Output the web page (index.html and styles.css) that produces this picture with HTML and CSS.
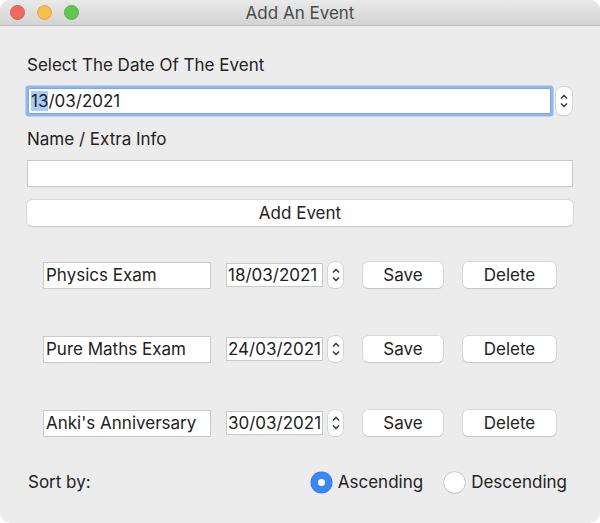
FILE: index.html
```html
<!DOCTYPE html>
<html>
<head>
<meta charset="utf-8">
<link rel="stylesheet" href="styles.css">
</head>
<body>
<div class="window">
  <div class="titlebar">
    <div class="lights">
      <span class="light red"></span>
      <span class="light yellow"></span>
      <span class="light green"></span>
    </div>
    <div class="title">Add An Event</div>
  </div>
  <div class="content">
    <div class="label first">Select The Date Of The Event</div>
    <div class="date-row">
      <div class="date-field focused"><span class="sel">13</span>/03/2021</div>
      <div class="stepper big">
        <svg width="10" height="18" viewBox="0 0 10 18"><path d="M2 6.5 L5 3.5 L8 6.5" fill="none" stroke="#2a2a2a" stroke-width="1.3"/><path d="M2 11.5 L5 14.5 L8 11.5" fill="none" stroke="#2a2a2a" stroke-width="1.3"/></svg>
      </div>
    </div>
    <div class="label second">Name / Extra Info</div>
    <div class="text-field wide"></div>
    <div class="button add">Add Event</div>

    <div class="event-row r1">
      <div class="text-field name">Physics Exam</div>
      <div class="text-field date">18/03/2021</div>
      <div class="stepper small">
        <svg width="10" height="18" viewBox="0 0 10 18"><path d="M2 6.5 L5 3.5 L8 6.5" fill="none" stroke="#2a2a2a" stroke-width="1.3"/><path d="M2 11.5 L5 14.5 L8 11.5" fill="none" stroke="#2a2a2a" stroke-width="1.3"/></svg>
      </div>
      <div class="button save">Save</div>
      <div class="button delete">Delete</div>
    </div>
    <div class="event-row">
      <div class="text-field name">Pure Maths Exam</div>
      <div class="text-field date">24/03/2021</div>
      <div class="stepper small">
        <svg width="10" height="18" viewBox="0 0 10 18"><path d="M2 6.5 L5 3.5 L8 6.5" fill="none" stroke="#2a2a2a" stroke-width="1.3"/><path d="M2 11.5 L5 14.5 L8 11.5" fill="none" stroke="#2a2a2a" stroke-width="1.3"/></svg>
      </div>
      <div class="button save">Save</div>
      <div class="button delete">Delete</div>
    </div>
    <div class="event-row">
      <div class="text-field name">Anki's Anniversary</div>
      <div class="text-field date">30/03/2021</div>
      <div class="stepper small">
        <svg width="10" height="18" viewBox="0 0 10 18"><path d="M2 6.5 L5 3.5 L8 6.5" fill="none" stroke="#2a2a2a" stroke-width="1.3"/><path d="M2 11.5 L5 14.5 L8 11.5" fill="none" stroke="#2a2a2a" stroke-width="1.3"/></svg>
      </div>
      <div class="button save">Save</div>
      <div class="button delete">Delete</div>
    </div>

    <div class="sort-row">
      <div class="sort-label">Sort by:</div>
      <div class="radios">
        <div class="radio-item"><span class="radio on"></span><span>Ascending</span></div>
        <div class="radio-item"><span class="radio"></span><span>Descending</span></div>
      </div>
    </div>
  </div>
</div>
</body>
</html>
```
FILE: styles.css
```css
html, body {
  margin: 0;
  padding: 0;
  background: #ffffff;
}
body {
  font-family: Inter, "Noto Sans", sans-serif;
  color: #222222;
  font-size: 17px;
}
.window {
  width: 600px;
  height: 523px;
  background: #ececec;
  border-radius: 10px;
  overflow: hidden;
  display: flex;
  flex-direction: column;
}
.titlebar {
  height: 25px;
  background: linear-gradient(#e9e9e9, #d4d4d4);
  border-bottom: 1px solid #bdbdbd;
  display: flex;
  align-items: center;
  position: relative;
}
.lights {
  display: flex;
  gap: 12px;
  padding-left: 10px;
}
.light {
  width: 15px;
  height: 15px;
  border-radius: 50%;
  box-sizing: border-box;
}
.red { background: #ee6a5f; border: 1px solid #dc5b50; }
.yellow { background: #f6be4f; border: 1px solid #e2a83d; }
.green { background: #62c655; border: 1px solid #52b245; }
.title {
  position: absolute;
  left: 0;
  right: 0;
  top: 0;
  height: 25px;
  line-height: 26px;
  text-align: center;
  font-size: 17px;
  color: #4a4a4a;
}
.content {
  padding: 0 27px;
  display: flex;
  flex-direction: column;
}
.label {
  height: 18px;
  line-height: 18px;
  white-space: nowrap;
}
.label.first { margin-top: 30px; }
.date-row {
  margin-top: 13px;
  display: flex;
  align-items: center;
  height: 28px;
}
.date-field {
  flex: 1;
  margin-left: 2px;
  height: 24px;
  line-height: 24px;
  background: #ffffff;
  padding-left: 2px;
}
.date-field.focused {
  box-shadow: 0 0 0 1px #7fa7e3, 0 0 0 3.5px #8eb6ef;
  border-radius: 1px;
}
.sel {
  background: #acccf6;
}
.stepper {
  background: #ffffff;
  border-radius: 6px;
  box-shadow: 0 0 0 0.5px #c2c2c2, 0 0.5px 1px rgba(0,0,0,0.15);
  display: flex;
  align-items: center;
  justify-content: center;
}
.stepper.big {
  width: 16px;
  height: 28px;
  margin-left: 6px;
  margin-right: 1px;
}
.stepper.small {
  width: 15px;
  height: 26px;
  margin-left: 5px;
}
.label.second { margin-top: 15px; }
.text-field {
  background: #ffffff;
  border: 1px solid #c9c9c9;
  box-sizing: border-box;
  white-space: nowrap;
}
.text-field.wide {
  margin-top: 12px;
  height: 27px;
}
.button {
  background: #ffffff;
  border-radius: 5px;
  box-shadow: 0 0 0 0.5px #c4c4c4, 0 1px 1px rgba(0,0,0,0.15);
  text-align: center;
  box-sizing: border-box;
}
.button.add {
  margin-top: 13px;
  height: 26px;
  line-height: 26px;
}
.event-row {
  display: flex;
  align-items: center;
  height: 26px;
  margin-top: 48px;
  padding-left: 16px;
}
.event-row.r1 { margin-top: 36px; }
.text-field.name {
  width: 168px;
  height: 27px;
  line-height: 25px;
  padding-left: 2px;
}
.text-field.date {
  width: 97px;
  height: 24px;
  line-height: 22px;
  margin-left: 15px;
  padding-left: 1px;
  overflow: hidden;
}
.button.save {
  width: 80px;
  height: 26px;
  line-height: 26px;
  margin-left: 20px;
}
.button.delete {
  width: 93px;
  height: 26px;
  line-height: 26px;
  margin-left: 20px;
}
.sort-row {
  margin-top: 34px;
  display: flex;
  align-items: center;
  justify-content: space-between;
  height: 24px;
}
.sort-label {
  padding-left: 1px;
}
.radios {
  display: flex;
  gap: 21px;
  padding-right: 6px;
}
.radio-item {
  display: flex;
  align-items: center;
  gap: 6px;
}
.radio {
  width: 21px;
  height: 21px;
  border-radius: 50%;
  background: #ffffff;
  box-sizing: border-box;
  box-shadow: 0 0 0 0.5px #b8b8b8, 0 0.5px 1px rgba(0,0,0,0.2);
  display: flex;
  align-items: center;
  justify-content: center;
}
.radio.on {
  background: #3b87f5;
  box-shadow: 0 0 0 0.5px #2f74df;
}
.radio.on::after {
  content: "";
  width: 7px;
  height: 7px;
  border-radius: 50%;
  background: #ffffff;
}
```
